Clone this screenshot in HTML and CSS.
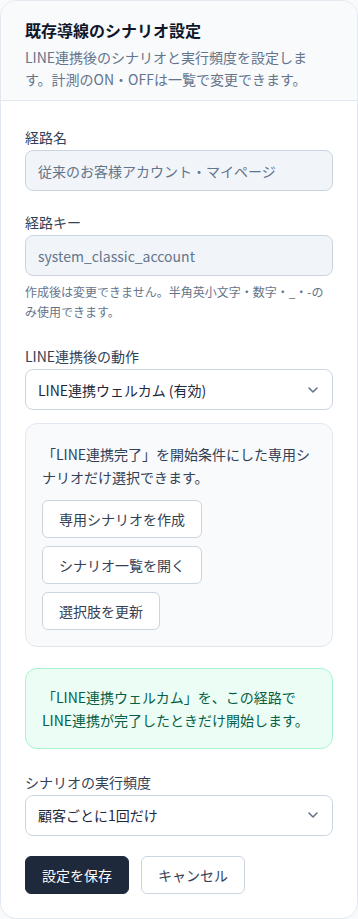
FILE: index.html
```html
<!DOCTYPE html>
<html lang="ja">
<head>
  <meta charset="utf-8">
  <title>既存導線のシナリオ設定</title>
  <link rel="stylesheet" href="styles.css">
</head>
<body>
  <div class="card">
    <header class="card-head">
      <h1>既存導線のシナリオ設定</h1>
      <p class="desc">LINE連携後のシナリオと実行頻度を設定します。計測のON・OFFは一覧で変更できます。</p>
    </header>

    <form class="card-body">
      <div class="field">
        <label for="routeName">経路名</label>
        <input class="input" id="routeName" type="text" value="従来のお客様アカウント・マイページ" readonly>
      </div>

      <div class="field field-key">
        <label for="routeKey">経路キー</label>
        <input class="input" id="routeKey" type="text" value="system_classic_account" readonly>
        <p class="help">作成後は変更できません。半角英小文字・数字・_・-のみ使用できます。</p>
      </div>

      <div class="field field-action">
        <label>LINE連携後の動作</label>
        <div class="select">
          <span>LINE連携ウェルカム (有効)</span>
          <svg width="10" height="6" viewBox="0 0 10 6"><path d="M1 1l4 4 4-4" fill="none" stroke="#64748b" stroke-width="1.6" stroke-linecap="round" stroke-linejoin="round"/></svg>
        </div>

        <div class="info-box">
          <p>「LINE連携完了」を開始条件にした専用シナリオだけ選択できます。</p>
          <div class="btn-stack">
            <button type="button" class="btn">専用シナリオを作成</button>
            <button type="button" class="btn">シナリオ一覧を開く</button>
            <button type="button" class="btn">選択肢を更新</button>
          </div>
        </div>
      </div>

      <div class="notice">「LINE連携ウェルカム」を、この経路で LINE連携が完了したときだけ開始します。</div>

      <div class="field field-freq">
        <label>シナリオの実行頻度</label>
        <div class="select">
          <span>顧客ごとに1回だけ</span>
          <svg width="10" height="6" viewBox="0 0 10 6"><path d="M1 1l4 4 4-4" fill="none" stroke="#64748b" stroke-width="1.6" stroke-linecap="round" stroke-linejoin="round"/></svg>
        </div>
      </div>

      <div class="actions">
        <button type="button" class="btn btn-dark">設定を保存</button>
        <button type="button" class="btn">キャンセル</button>
      </div>
    </form>
  </div>
</body>
</html>
```

FILE: styles.css
```css
/* page */
body {
  margin: 0;
  background-color: #f8fafc;
  font-family: "Noto Sans CJK JP", "Noto Sans", sans-serif;
  color: #1e293b;
}

.card {
  box-sizing: border-box;
  width: 358px;
  height: 919px;
  background: white;
  border: 1px solid #e2e8f0;
  border-radius: 16px;
  overflow: hidden;
}

/* header */
.card-head {
  background-color: #f8fafc;
  border-bottom: 1px solid #e2e8f0;
  padding: 17px 24px 11px;
  height: 100px;
  box-sizing: border-box;
}

.card-head h1 {
  margin: 0;
  font-size: 16px;
  line-height: 24px;
  font-weight: 700;
  color: #0f172a;
}

.desc {
  margin: 4px 0 0;
  font-size: 14px;
  line-height: 22px;
  color: #64748b;
}

/* form */
.card-body {
  padding: 26px 24px 24px;
  display: flex;
  flex-direction: column;
}

.field {
  display: flex;
  flex-direction: column;
}

.field label {
  font-size: 14px;
  line-height: 20px;
  color: #334155;
  margin-bottom: 3px;
}

.field-key { margin-top: 21px; }
.field-action { margin-top: 25px; }
.field-freq { margin-top: 23px; }

.input {
  box-sizing: border-box;
  height: 41px;
  padding: 0 12px;
  border: 1px solid #cbd5e1;
  border-radius: 8px;
  background-color: #f1f5f9;
  font-family: inherit;
  font-size: 14px;
  color: #64748b;
  outline: none;
}

.help {
  margin: 6px 0 0;
  font-size: 12px;
  line-height: 19.5px;
  color: #64748b;
}

.select {
  box-sizing: border-box;
  height: 41px;
  padding: 0 14px 0 12px;
  border: 1px solid #cbd5e1;
  border-radius: 8px;
  background: white;
  display: flex;
  align-items: center;
  justify-content: space-between;
  font-size: 14px;
  color: #1e293b;
}

.info-box {
  margin-top: 13px;
  padding: 19px 16px 16px;
  border: 1px solid #e2e8f0;
  border-radius: 12px;
  background-color: #f8fafc;
}

.info-box p {
  margin: 0;
  font-size: 14px;
  line-height: 22.75px;
  color: #334155;
}

.btn-stack {
  margin-top: 11px;
  display: flex;
  flex-direction: column;
  align-items: flex-start;
  gap: 8px;
}

.btn {
  box-sizing: border-box;
  height: 38px;
  padding: 0 16px;
  border: 1px solid #cbd5e1;
  border-radius: 6px;
  background: white;
  font-family: inherit;
  font-size: 14px;
  color: #334155;
  cursor: pointer;
}

.btn-dark {
  background-color: #1e293b;
  border-color: #1e293b;
  color: white;
}

.notice {
  margin-top: 21px;
  padding: 17px 16px 16px;
  border: 1px solid #a7f3d0;
  border-radius: 12px;
  background-color: #ecfdf5;
  font-size: 14px;
  line-height: 23px;
  color: #065f46;
}

.actions {
  margin-top: 20px;
  display: flex;
  gap: 12px;
}
```
